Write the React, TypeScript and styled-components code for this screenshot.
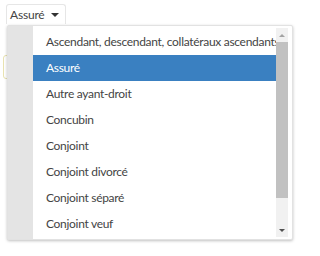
import styled, { createGlobalStyle } from "styled-components";

const options = [
  "Ascendant, descendant, collatéraux ascendants",
  "Assuré",
  "Autre ayant-droit",
  "Concubin",
  "Conjoint",
  "Conjoint divorcé",
  "Conjoint séparé",
  "Conjoint veuf",
];

const selected = "Assuré";

const GlobalStyle = createGlobalStyle`
  body {
    margin: 0;
    background: #fff;
    font-family: Lato, "Open Sans", sans-serif;
    color: #444;
  }
`;

const Page = styled.div`
  position: relative;
  width: 320px;
  height: 256px;
  overflow: hidden;
`;

const Trigger = styled.button`
  display: flex;
  align-items: center;
  gap: 7px;
  margin: 4px 0 0 6px;
  height: 20px;
  padding: 0 6px 0 3px;
  border: 1px solid #e6e6e6;
  border-bottom: none;
  border-radius: 3px 3px 0 0;
  background: #fff;
  font-family: Lato, sans-serif;
  font-size: 12px;
  letter-spacing: -0.2px;
  color: #444;
`;

const Caret = styled.span`
  width: 0;
  height: 0;
  border-left: 4px solid transparent;
  border-right: 4px solid transparent;
  border-top: 4px solid #333;
`;

const BackdropField = styled.div`
  position: absolute;
  left: 3px;
  top: 55px;
  width: 8px;
  height: 22px;
  border: 1px solid #e8e2b0;
  border-radius: 3px;
`;

const Panel = styled.div`
  position: absolute;
  left: 7px;
  top: 25px;
  width: 286px;
  height: 215px;
  display: flex;
  background: #fff;
  border: 1px solid #e2e2e2;
  border-radius: 2px;
  box-shadow: 0 1px 3px rgba(0, 0, 0, 0.25);
  box-sizing: border-box;
`;

const Gutter = styled.div`
  width: 25px;
  background: #e4e4e4;
`;

const List = styled.ul`
  flex: 1;
  min-width: 0;
  list-style: none;
  margin: 0;
  padding: 3px 0 0;
  overflow: hidden;
`;

const Item = styled.li<{ $active: boolean }>`
  height: 26px;
  line-height: 26px;
  padding-left: 13px;
  font-size: 12px;
  letter-spacing: -0.3px;
  white-space: nowrap;
  overflow: hidden;
  background: ${(p) => (p.$active ? "#3a80c1" : "transparent")};
  color: ${(p) => (p.$active ? "#fff" : "#444")};
`;

const ScrollTrack = styled.div`
  width: 12px;
  margin: 2px 4px 2px 0;
  background: #f1f1f1;
  display: flex;
  flex-direction: column;
  align-items: center;
`;

const ArrowBox = styled.div`
  height: 14px;
  display: flex;
  align-items: center;
  justify-content: center;
`;

const UpArrow = styled.span`
  border-left: 3px solid transparent;
  border-right: 3px solid transparent;
  border-bottom: 3px solid #a3a3a3;
`;

const DownArrow = styled.span`
  border-left: 3px solid transparent;
  border-right: 3px solid transparent;
  border-top: 3px solid #505050;
`;

const Thumb = styled.div`
  width: 12px;
  height: 156px;
  background: #c1c1c1;
`;

const Spacer = styled.div`
  flex: 1;
`;

export default function App() {
  return (
    <Page>
      <GlobalStyle />
      <Trigger>
        {selected}
        <Caret />
      </Trigger>
      <BackdropField />
      <Panel>
        <Gutter />
        <List>
          {options.map((o) => (
            <Item key={o} $active={o === selected}>
              {o}
            </Item>
          ))}
        </List>
        <ScrollTrack>
          <ArrowBox>
            <UpArrow />
          </ArrowBox>
          <Thumb />
          <Spacer />
          <ArrowBox>
            <DownArrow />
          </ArrowBox>
        </ScrollTrack>
      </Panel>
    </Page>
  );
}
